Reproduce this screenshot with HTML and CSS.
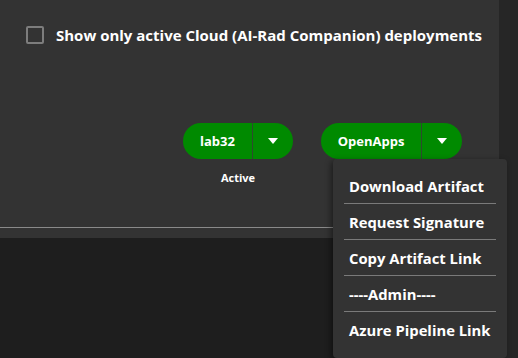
FILE: index.html
```html
<!DOCTYPE html>
<html>
<head>
<meta charset="utf-8">
<link rel="stylesheet" href="styles.css">
</head>
<body>
<div class="page">
  <div class="main">
    <div class="panel">
      <label class="check-row">
        <span class="checkbox"></span>
        <span class="check-label">Show only active Cloud (AI-Rad Companion) deployments</span>
      </label>
      <div class="actions">
        <div class="group">
          <div class="split">
            <span class="split-main lab">lab32</span>
            <span class="split-toggle"><span class="caret"></span></span>
          </div>
          <div class="status">Active</div>
        </div>
        <div class="group">
          <div class="split">
            <span class="split-main apps">OpenApps</span>
            <span class="split-toggle"><span class="caret"></span></span>
          </div>
        </div>
      </div>
      <div class="rule"></div>
    </div>
    <div class="below"></div>
  </div>
  <div class="strip"></div>
</div>
<ul class="menu">
  <li>Download Artifact</li>
  <li>Request Signature</li>
  <li>Copy Artifact Link</li>
  <li>----Admin----</li>
  <li>Azure Pipeline Link</li>
</ul>
</body>
</html>
```
FILE: styles.css
```css
html, body {
  margin: 0;
  padding: 0;
}
body {
  width: 518px;
  height: 358px;
  overflow: hidden;
  background: #1e1e1e;
  font-family: "Open Sans", "DejaVu Sans", sans-serif;
  color: #fff;
  position: relative;
}
.page {
  display: flex;
  height: 358px;
}
.main {
  width: 499px;
  display: flex;
  flex-direction: column;
}
.strip {
  flex: 1;
  background: #262626;
}
.panel {
  background: #333333;
  height: 238px;
  display: flex;
  flex-direction: column;
}
.below {
  flex: 1;
  background: #1e1e1e;
}
.check-row {
  display: flex;
  align-items: center;
  margin: 26px 0 0 26px;
  height: 18px;
}
.checkbox {
  width: 14px;
  height: 14px;
  border: 2px solid #7d7d7d;
  border-radius: 2px;
  box-sizing: content-box;
}
.check-label {
  margin-left: 12px;
  font-size: 15px;
  font-weight: 700;
  white-space: nowrap;
}
.actions {
  display: flex;
  justify-content: flex-end;
  gap: 28px;
  margin-top: 79px;
  padding-right: 37px;
  height: 68px;
}
.group {
  display: flex;
  flex-direction: column;
  align-items: center;
}
.split {
  display: flex;
  height: 36px;
  border-radius: 18px;
  overflow: hidden;
  background: #008a00;
}
.split-main {
  display: flex;
  align-items: center;
  justify-content: center;
  font-size: 13px;
  font-weight: 700;
  border-right: 1px solid #2d4a2d;
}
.split-main.lab { width: 69px; }
.split-main.apps { width: 100px; }
.split-toggle {
  width: 40px;
  display: flex;
  align-items: center;
  justify-content: center;
}
.caret {
  width: 0;
  height: 0;
  border-left: 5px solid transparent;
  border-right: 5px solid transparent;
  border-top: 6px solid #fff;
}
.status {
  margin-top: 11px;
  font-size: 11px;
  font-weight: 700;
}
.rule {
  height: 1px;
  background: #8a8a8a;
  margin-top: 36px;
}
.menu {
  position: absolute;
  left: 333px;
  top: 159px;
  width: 174px;
  margin: 0;
  padding: 9px 11px 10px;
  box-sizing: border-box;
  list-style: none;
  background: #333333;
  border-radius: 4px;
  box-shadow: -2px 2px 6px rgba(0, 0, 0, 0.45);
}
.menu li {
  height: 36px;
  display: flex;
  align-items: center;
  padding-left: 5px;
  font-size: 14.8px;
  font-weight: 700;
  white-space: nowrap;
  border-bottom: 1px solid #7a7a7a;
  box-sizing: border-box;
}
.menu li:last-child {
  border-bottom: none;
}
```
